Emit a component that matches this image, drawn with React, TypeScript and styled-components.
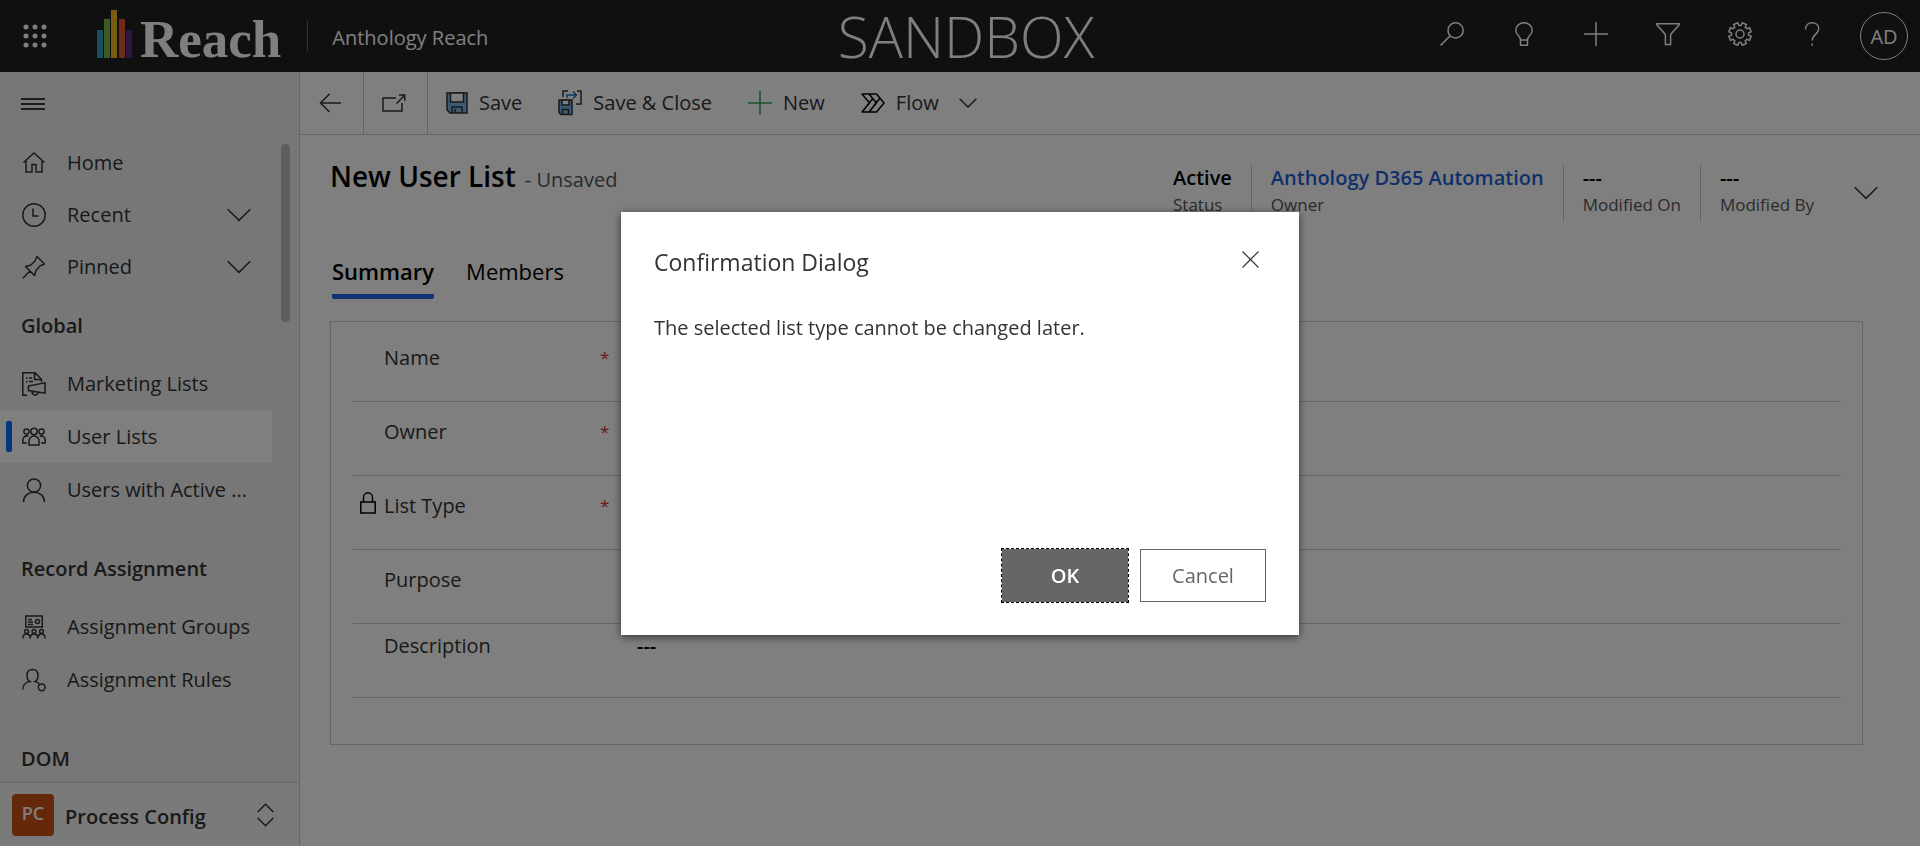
import React from "react";
import styled, { createGlobalStyle, css } from "styled-components";

const Global = createGlobalStyle`
  *, *::before, *::after { box-sizing: border-box; }
  body { margin: 0; background: #fff; color: #333; font: 20px/28px "Open Sans", "Noto Sans", sans-serif; }
  button, input { font: inherit; color: inherit; }
  button { border: 0; padding: 0; background: none; cursor: pointer; }
  a { color: inherit; text-decoration: none; }
  h1, h2, p, dl, dd, dt { margin: 0; padding: 0; }
`;

const Page = styled.div`
  display: flex;
  flex-direction: column;
  height: 100vh;
  overflow: hidden;
`;

/* Top bar */
const TopBar = styled.header`
  display: grid;
  grid-template-columns: 1fr auto 1fr;
  flex: none;
  height: 72px;
  background: #202020;
  color: #fff;
`;
const Brand = styled.div`
  display: flex;
  align-items: center;
`;
const WaffleButton = styled.button`
  display: grid;
  place-items: center;
  width: 70px;
  height: 70px;
`;
const Logo = styled.a`
  display: flex;
  align-items: flex-end;
  gap: 8px;
  height: 72px;
  padding: 0 0 14px 27px;
`;
const LogoText = styled.span`
  font: bold 53px/48px "Liberation Serif", serif;
  height: 43px;
`;
const Divider = styled.span`
  width: 1px;
  height: 30px;
  margin: 0 24px 0 26px;
  background: #666;
`;
const AppName = styled.a`
  padding-top: 3px;
  white-space: nowrap;
`;
const Sandbox = styled.div`
  padding-left: 12px;
  font-size: 57px;
  font-weight: 300;
  line-height: 72px;
`;
const TopActions = styled.div`
  display: flex;
  justify-content: flex-end;
`;
const TopButton = styled.button`
  display: grid;
  place-items: center;
  width: 72px;
  height: 68px;
`;
const AvatarButton = styled(TopButton)`
  height: 72px;
`;
const Avatar = styled.span`
  width: 48px;
  height: 48px;
  border: 1px solid #fff;
  border-radius: 50%;
  line-height: 48px;
`;

/* Side navigation */
const Body = styled.div`
  display: flex;
  flex: 1;
  min-height: 0;
`;
const Side = styled.nav`
  display: flex;
  flex-direction: column;
  flex: none;
  width: 300px;
  border-right: 1px solid #ccc;
  background: #efefef;
`;
const MenuToggle = styled.button`
  display: flex;
  align-items: center;
  flex: none;
  height: 64px;
  padding: 0 21px;
`;
const SideScroll = styled.div`
  display: flex;
  flex: 1;
  min-height: 0;
  gap: 9px;
  overflow: hidden;
`;
const SideGroups = styled.div`
  width: 272px;
`;
const GroupTitle = styled.h2<{ $spaced?: boolean }>`
  margin-top: ${(p) => (p.$spaced ? 20 : 0)}px;
  padding: 2px 21px 0;
  font-size: 20px;
  font-weight: 600;
  line-height: 62px;
`;
const itemBase = css`
  display: flex;
  align-items: center;
  gap: 21px;
  width: 100%;
  height: 53px;
  padding: 0 21px 0 22px;
  text-align: left;
  white-space: nowrap;
`;
const NavLink = styled.a<{ $active?: boolean }>`
  ${itemBase}
  ${(p) =>
    p.$active &&
    css`
      padding-left: 6px;
      gap: 10px;
      background: #fff;
      & > span:last-child { padding-left: 11px; }
    `}
`;
const NavToggle = styled.button`
  ${itemBase}
  height: 52px;
`;
const ActiveMark = styled.span`
  width: 6px;
  height: 31px;
  border-radius: 2px;
  background: #0b6aff;
`;
const NavText = styled.span`
  flex: 1;
  overflow: hidden;
  text-overflow: ellipsis;
`;
const Thumb = styled.div`
  width: 9px;
  height: 178px;
  margin-top: 8px;
  border-radius: 4px;
  background: #bdbdbd;
`;
const AreaSwitch = styled.button`
  display: flex;
  align-items: center;
  flex: none;
  gap: 11px;
  height: 64px;
  padding: 0 25px 0 12px;
  border-top: 1px solid #ccc;
  background: #f4f4f4;
  text-align: left;
  font-weight: 600;
`;
const AreaName = styled(NavText)`
  padding-top: 4px;
`;
const AreaBadge = styled.span`
  width: 42px;
  height: 42px;
  border-radius: 4px;
  background: #ca5010;
  color: #fff;
  font-size: 18px;
  line-height: 38px;
  text-align: center;
`;

/* Main column */
const Main = styled.main`
  display: flex;
  flex-direction: column;
  flex: 1;
  min-width: 0;
`;
const CommandBar = styled.div`
  display: flex;
  flex: none;
  height: 63px;
  border-bottom: 1px solid #ccc;
`;
const IconCommand = styled.button`
  display: grid;
  place-items: center;
  width: 64px;
  padding-right: 3px;
  border-right: 1px solid #ccc;
`;
const Commands = styled.div`
  display: flex;
  gap: 36px;
  padding-left: 18px;
`;
const Command = styled.button`
  display: flex;
  align-items: center;
  gap: 11px;
  white-space: nowrap;
`;
const FlowText = styled.span`
  padding-right: 9px;
`;
const RecordHeader = styled.div`
  display: flex;
  justify-content: space-between;
  align-items: flex-start;
  padding: 26px 42px 0 30px;
`;
const Title = styled.h1`
  color: #000;
  font-size: 28px;
  font-weight: 600;
  line-height: 30px;
`;
const Unsaved = styled.span`
  margin-left: 9px;
  color: #555;
  font-size: 20px;
  font-weight: 400;
`;
const Summary = styled.div`
  display: flex;
  align-items: flex-start;
  padding-top: 3px;
`;
const Facts = styled.dl`
  display: flex;
`;
const Fact = styled.div`
  display: flex;
  flex-direction: column-reverse;
  justify-content: flex-end;
  height: 58px;
  padding: 0 19px;
  & + & { border-left: 1px solid #ccc; }
`;
const FactLabel = styled.dt`
  color: #555;
  font-size: 17px;
  line-height: 26px;
`;
const FactValue = styled.dd`
  color: #000;
  font-weight: 600;
  line-height: 28px;
  & a { color: #1f5fd8; }
`;
const ExpandButton = styled.button`
  display: grid;
  place-items: center;
  width: 24px;
  height: 58px;
  margin-left: 21px;
`;
const Tabs = styled.div`
  display: flex;
  gap: 32px;
  margin-top: 35px;
  padding: 0 32px;
`;
const Tab = styled.button<{ $active?: boolean }>`
  height: 42px;
  padding-bottom: 10px;
  border-bottom: 5px solid ${(p) => (p.$active ? "#2266e3" : "transparent")};
  border-radius: 2px;
  color: #000;
  font-size: 22px;
  font-weight: ${(p) => (p.$active ? 600 : 400)};
  line-height: 26px;
`;
const FormCard = styled.form`
  margin: 22px 57px 0 30px;
  padding: 6px 21px 46px 22px;
  border: 1px solid #ccc;
`;
const FieldRow = styled.div<{ $compact?: boolean }>`
  display: grid;
  grid-template-columns: 31px 216px 32px 1fr;
  height: 74px;
  padding-top: ${(p) => (p.$compact ? 8 : 16)}px;
  border-bottom: 1px solid #ccc;
`;
const LockCell = styled.span`
  padding-left: 7px;
`;
const Required = styled.span`
  color: #d13438;
  font-size: 17px;
`;
const FieldInput = styled.input`
  width: 100%;
  height: 28px;
  padding: 0 5px;
  border: 0;
  background: transparent;
  color: #000;
  font-weight: 600;
`;

/* Dialog */
const Overlay = styled.div`
  position: fixed;
  inset: 0;
  display: grid;
  place-items: center;
  background: rgba(0, 0, 0, 0.5);
`;
const Dialog = styled.section`
  display: flex;
  flex-direction: column;
  width: 678px;
  min-height: 423px;
  padding: 33px;
  background: #fff;
  box-shadow: 0 2px 8px rgba(0, 0, 0, 0.6);
`;
const DialogHead = styled.div`
  display: flex;
  justify-content: space-between;
`;
const DialogTitle = styled.h2`
  font-size: 23px;
  font-weight: 400;
  line-height: 34px;
`;
const CloseButton = styled.button`
  display: grid;
  place-items: center;
  width: 32px;
  height: 30px;
`;
const DialogText = styled.p`
  flex: 1;
  padding-top: 35px;
`;
const DialogActions = styled.div`
  display: flex;
  justify-content: flex-end;
  gap: 12px;
`;
const DialogButton = styled.button<{ $primary?: boolean }>`
  width: 126px;
  height: 53px;
  padding-top: 2px;
  border: 1px solid #666;
  background: #fff;
  color: #666;
  ${(p) =>
    p.$primary &&
    css`
      background: #666;
      color: #fff;
      font-weight: 600;
      outline: 1px dashed #000;
    `}
`;

type IconProps = { size?: number; width?: number; stroke?: number; children: React.ReactNode };
const Icon = ({ size = 24, width = size, stroke = 1.5, children }: IconProps) => (
  <svg width={width} height={size} viewBox={`0 0 ${width} ${size}`} fill="none" stroke="currentColor" strokeWidth={stroke} aria-hidden="true">
    {children}
  </svg>
);

const Chevron = () => <Icon size={14} width={24}><path d="M.7 1.2 12 12.4 23.3 1.2" /></Icon>;

const gearPath = (() => {
  const teeth = 8;
  const points: string[] = [];
  for (let i = 0; i < teeth; i++) {
    const mid = ((i + 0.5) * 2 * Math.PI) / teeth;
    [[-0.26, 8.6], [-0.2, 11.4], [0.2, 11.4], [0.26, 8.6]].forEach(([a, r]) =>
      points.push(`${(12 + r * Math.sin(mid + a)).toFixed(2)} ${(12 - r * Math.cos(mid + a)).toFixed(2)}`)
    );
  }
  return `M${points.join("L")}Z`;
})();

const topActions = [
  { label: "Search", icon: <Icon><circle cx="15.6" cy="8.4" r="7.6" /><path d="M10.2 13.8.6 23.4" /></Icon> },
  { label: "Insights", icon: <Icon><path d="M8.5 18c0-4-4.7-5-4.7-9.6a8.2 7.7 0 0 1 16.4 0c0 4.6-4.7 5.6-4.7 9.6M8.5 18h7v5.2h-7z" /></Icon> },
  { label: "Quick create", icon: <Icon><path d="M12 0v24M0 12h24" /></Icon> },
  { label: "Advanced find", icon: <Icon><path d="M.8 1.8h22.4v1L14.6 12.5v10H9.4v-10L.8 2.8z" /></Icon> },
  { label: "Settings", icon: <Icon><path d={gearPath} strokeLinejoin="round" /><circle cx="12" cy="12" r="4" /></Icon> },
  { label: "Help", icon: <Icon><path d="M5.5 7.5c0-4 2.7-6.7 6.7-6.7s6.5 2.5 6.5 6c0 5.7-6.5 5.5-6.5 11.7M12.2 21.5v2.3" /></Icon> },
];

const HomeIcon = () => <Icon><path d="M1.5 11.5 12 2l10.5 9.5M4 9.5V21h6v-7.5h4V21h6V9.5" /></Icon>;
const ClockIcon = () => <Icon><circle cx="12" cy="12" r="11.2" /><path d="M11 5.5V13h5.5" /></Icon>;
const PinIcon = () => <Icon><path d="M.8 23.2 8.5 15.5M3.5 11.5l9 9 1.5-5 4-4.5 4.5-2L15 1.5l-2.2 4.7-4.3 4z" strokeLinejoin="round" /></Icon>;
const MarketingIcon = () => <Icon><path d="M5 23.2H.8V.8H13l6.5 6.5V10M12.5 1v6.5h6.8M4 6h1.5M7 6h3M4 9.5h1.5M7 9.5h4M6.5 14 23 10.8v10.4L6.5 18.5zM10 19.5c0 4.5 6 4.5 6 1" /></Icon>;
const PeopleIcon = () => (
  <Icon><circle cx="4.5" cy="6.5" r="2.6" /><circle cx="12" cy="6.5" r="3.2" /><circle cx="19.5" cy="6.5" r="2.6" />
    <path d="M7 20v-4a5 5 0 0 1 10 0v4zM5 18H.8v-3a4 4 0 0 1 5.5-3.8M19 18h4.2v-3a4 4 0 0 0-5.5-3.8" /></Icon>
);
const PersonIcon = () => <Icon><circle cx="12" cy="7.5" r="6.6" /><path d="M1.5 24c0-6 4.5-9.8 10.5-9.8S22.5 18 22.5 24" /></Icon>;
const GroupIcon = () => (
  <Icon><path d="M3.8 1h16.5v11H3.8zM6 4.5h4M6 7h5M6 9.5h5" /><circle cx="15.5" cy="6.5" r="2" />
    <circle cx="4.5" cy="16.5" r="1.9" /><circle cx="12" cy="16.5" r="1.9" /><circle cx="19.5" cy="16.5" r="1.9" />
    <path d="M.8 23.5c0-3 1.5-4.5 3.7-4.5s3.7 1.5 3.7 4.5c0-3 1.6-4.5 3.8-4.5s3.8 1.5 3.8 4.5c0-3 1.5-4.5 3.7-4.5s3.7 1.5 3.7 4.5" /></Icon>
);
const RuleIcon = () => <Icon><path d="M.8 21.5c0-4.5 3-7.5 7-8-2-1-2.8-3.5-2.8-6 0-4 2-6 5.5-6s5.5 2 5.5 6c0 2.5-1 5-3 6 2 .5 3 1 4.2 2.2" /><circle cx="19.7" cy="19.3" r="3.4" /></Icon>;

const navGroups = [
  { title: "Global", items: [{ text: "Marketing Lists", icon: <MarketingIcon /> }, { text: "User Lists", icon: <PeopleIcon />, active: true }, { text: "Users with Active ...", icon: <PersonIcon /> }] },
  { title: "Record Assignment", items: [{ text: "Assignment Groups", icon: <GroupIcon /> }, { text: "Assignment Rules", icon: <RuleIcon /> }] },
  { title: "DOM", items: [] },
];

const fields = [
  { id: "name", label: "Name", required: true },
  { id: "owner", label: "Owner", required: true },
  { id: "listType", label: "List Type", required: true, locked: true },
  { id: "purpose", label: "Purpose" },
  { id: "description", label: "Description", value: "---", compact: true },
];

const facts = [
  { label: "Status", value: "Active" },
  { label: "Owner", value: <a href="#owner">Anthology D365 Automation</a> },
  { label: "Modified On", value: "---" },
  { label: "Modified By", value: "---" },
];

export default function App() {
  return (
    <Page>
      <Global />
      <TopBar>
        <Brand>
          <WaffleButton aria-label="App launcher">
            <svg width="24" height="24" fill="#fff">
              {[3, 12, 21].flatMap((y) => [3, 12, 21].map((x) => <circle key={`${x}-${y}`} cx={x} cy={y} r="2.5" />))}
            </svg>
          </WaffleButton>
          <Logo href="#home">
            <svg width="35" height="48" aria-hidden="true">
              <rect y="20" width="6" height="28" fill="#2f9fc8" />
              <rect x="7" y="9" width="6" height="39" fill="#7fb53c" />
              <rect x="14" width="6" height="48" fill="#efb81f" />
              <rect x="22" y="9" width="6" height="39" fill="#e2552c" />
              <rect x="29" y="20" width="6" height="28" fill="#5a3084" />
            </svg>
            <LogoText>Reach</LogoText>
          </Logo>
          <Divider />
          <AppName href="#app">Anthology Reach</AppName>
        </Brand>
        <Sandbox>SANDBOX</Sandbox>
        <TopActions>
          {topActions.map((a) => <TopButton key={a.label} aria-label={a.label}>{a.icon}</TopButton>)}
          <AvatarButton><Avatar>AD</Avatar></AvatarButton>
        </TopActions>
      </TopBar>
      <Body>
        <Side>
          <MenuToggle aria-label="Toggle menu"><Icon size={12} width={24}><path d="M0 1h24M0 6h24M0 11h24" stroke="#000" /></Icon></MenuToggle>
          <SideScroll>
            <SideGroups>
              <NavLink href="#home"><HomeIcon /><NavText>Home</NavText></NavLink>
              <NavToggle><ClockIcon /><NavText>Recent</NavText><Chevron /></NavToggle>
              <NavToggle><PinIcon /><NavText>Pinned</NavText><Chevron /></NavToggle>
              {navGroups.map((group, i) => (
                <section key={group.title}>
                  <GroupTitle $spaced={i > 0}>{group.title}</GroupTitle>
                  {group.items.map((item) => (
                    <NavLink key={item.text} href="#list" $active={"active" in item}>
                      {"active" in item && <ActiveMark />}
                      {item.icon}
                      <NavText>{item.text}</NavText>
                    </NavLink>
                  ))}
                </section>
              ))}
            </SideGroups>
            <Thumb />
          </SideScroll>
          <AreaSwitch>
            <AreaBadge>PC</AreaBadge>
            <AreaName>Process Config</AreaName>
            <Icon size={24} width={17}><path d="M.7 9 8.5 1.2 16.3 9M.7 15l7.8 7.8 7.8-7.8" /></Icon>
          </AreaSwitch>
        </Side>
        <Main>
          <CommandBar>
            <IconCommand aria-label="Back"><Icon width={22} size={20}><path d="M22 10H1.5M10.5 1l-9 9 9 9" /></Icon></IconCommand>
            <IconCommand aria-label="Open in new window"><Icon width={24} size={18}><path d="M14 4H1v13h19V9M14.5 9.5l8-8M17 1h5.8v5.8" /></Icon></IconCommand>
            <Commands>
              <Command>
                <Icon width={22} size={22}><path d="M1 1h20v20H4l-3-3z" fill="#7ab4e8" /><path d="M4.5 1h13v9h-13z" fill="#fff" /><path d="M6 21v-6h10v6M9 17v4" /></Icon>
                Save
              </Command>
              <Command>
                <Icon width={24} size={26}><path d="M1 10h13v14.5H3l-2-2z" fill="#7ab4e8" /><path d="M4 10h7v5H4z" fill="#fff" /><path d="M4.5 24.5v-5h6v5" /><path d="M5 7V1h5M19 1h4v13h-5" /><path d="M9 8V5h9M15 1.5 18.5 5 15 8.5" stroke="#1b74c5" /></Icon>
                Save &amp; Close
              </Command>
              <Command>
                <Icon><path d="M12 0v24M0 12h24" stroke="#2fa84f" /></Icon>
                New
              </Command>
              <Command>
                <Icon width={24} size={20}><path d="M1 1h14.5l7.5 9-7.5 9H1l7.5-9zM8 1l7.5 9L8 19M11.8 5.5 1 19M19 5 8 19" stroke="#000" strokeLinejoin="round" /></Icon>
                <FlowText>Flow</FlowText>
                <Icon width={18} size={10}><path d="M.6.8 9 9 17.4.8" /></Icon>
              </Command>
            </Commands>
          </CommandBar>
          <RecordHeader>
            <Title>New User List<Unsaved>- Unsaved</Unsaved></Title>
            <Summary>
              <Facts>
                {facts.map((f) => (
                  <Fact key={f.label}><FactLabel>{f.label}</FactLabel><FactValue>{f.value}</FactValue></Fact>
                ))}
              </Facts>
              <ExpandButton aria-label="More header fields"><Chevron /></ExpandButton>
            </Summary>
          </RecordHeader>
          <Tabs role="tablist">
            <Tab role="tab" aria-selected $active>Summary</Tab>
            <Tab role="tab">Members</Tab>
          </Tabs>
          <FormCard>
            {fields.map((f) => (
              <FieldRow key={f.id} $compact={f.compact}>
                <LockCell>
                  {f.locked && <Icon width={16} size={22}><path d="M.8 10h14.4v11H.8zM3.5 10V5.500a4.5 4.7 0 0 1 9 0V10" stroke="#000" /></Icon>}
                </LockCell>
                <label htmlFor={f.id}>{f.label}</label>
                <Required>{f.required && "*"}</Required>
                <FieldInput id={f.id} defaultValue={f.value} />
              </FieldRow>
            ))}
          </FormCard>
        </Main>
      </Body>
      <Overlay>
        <Dialog role="dialog" aria-modal="true" aria-labelledby="dialog-title">
          <DialogHead>
            <DialogTitle id="dialog-title">Confirmation Dialog</DialogTitle>
            <CloseButton aria-label="Close"><Icon size={17} stroke={1.2}><path d="m.5.5 16 16M16.5.5l-16 16" /></Icon></CloseButton>
          </DialogHead>
          <DialogText>The selected list type cannot be changed later.</DialogText>
          <DialogActions>
            <DialogButton $primary>OK</DialogButton>
            <DialogButton>Cancel</DialogButton>
          </DialogActions>
        </Dialog>
      </Overlay>
    </Page>
  );
}
